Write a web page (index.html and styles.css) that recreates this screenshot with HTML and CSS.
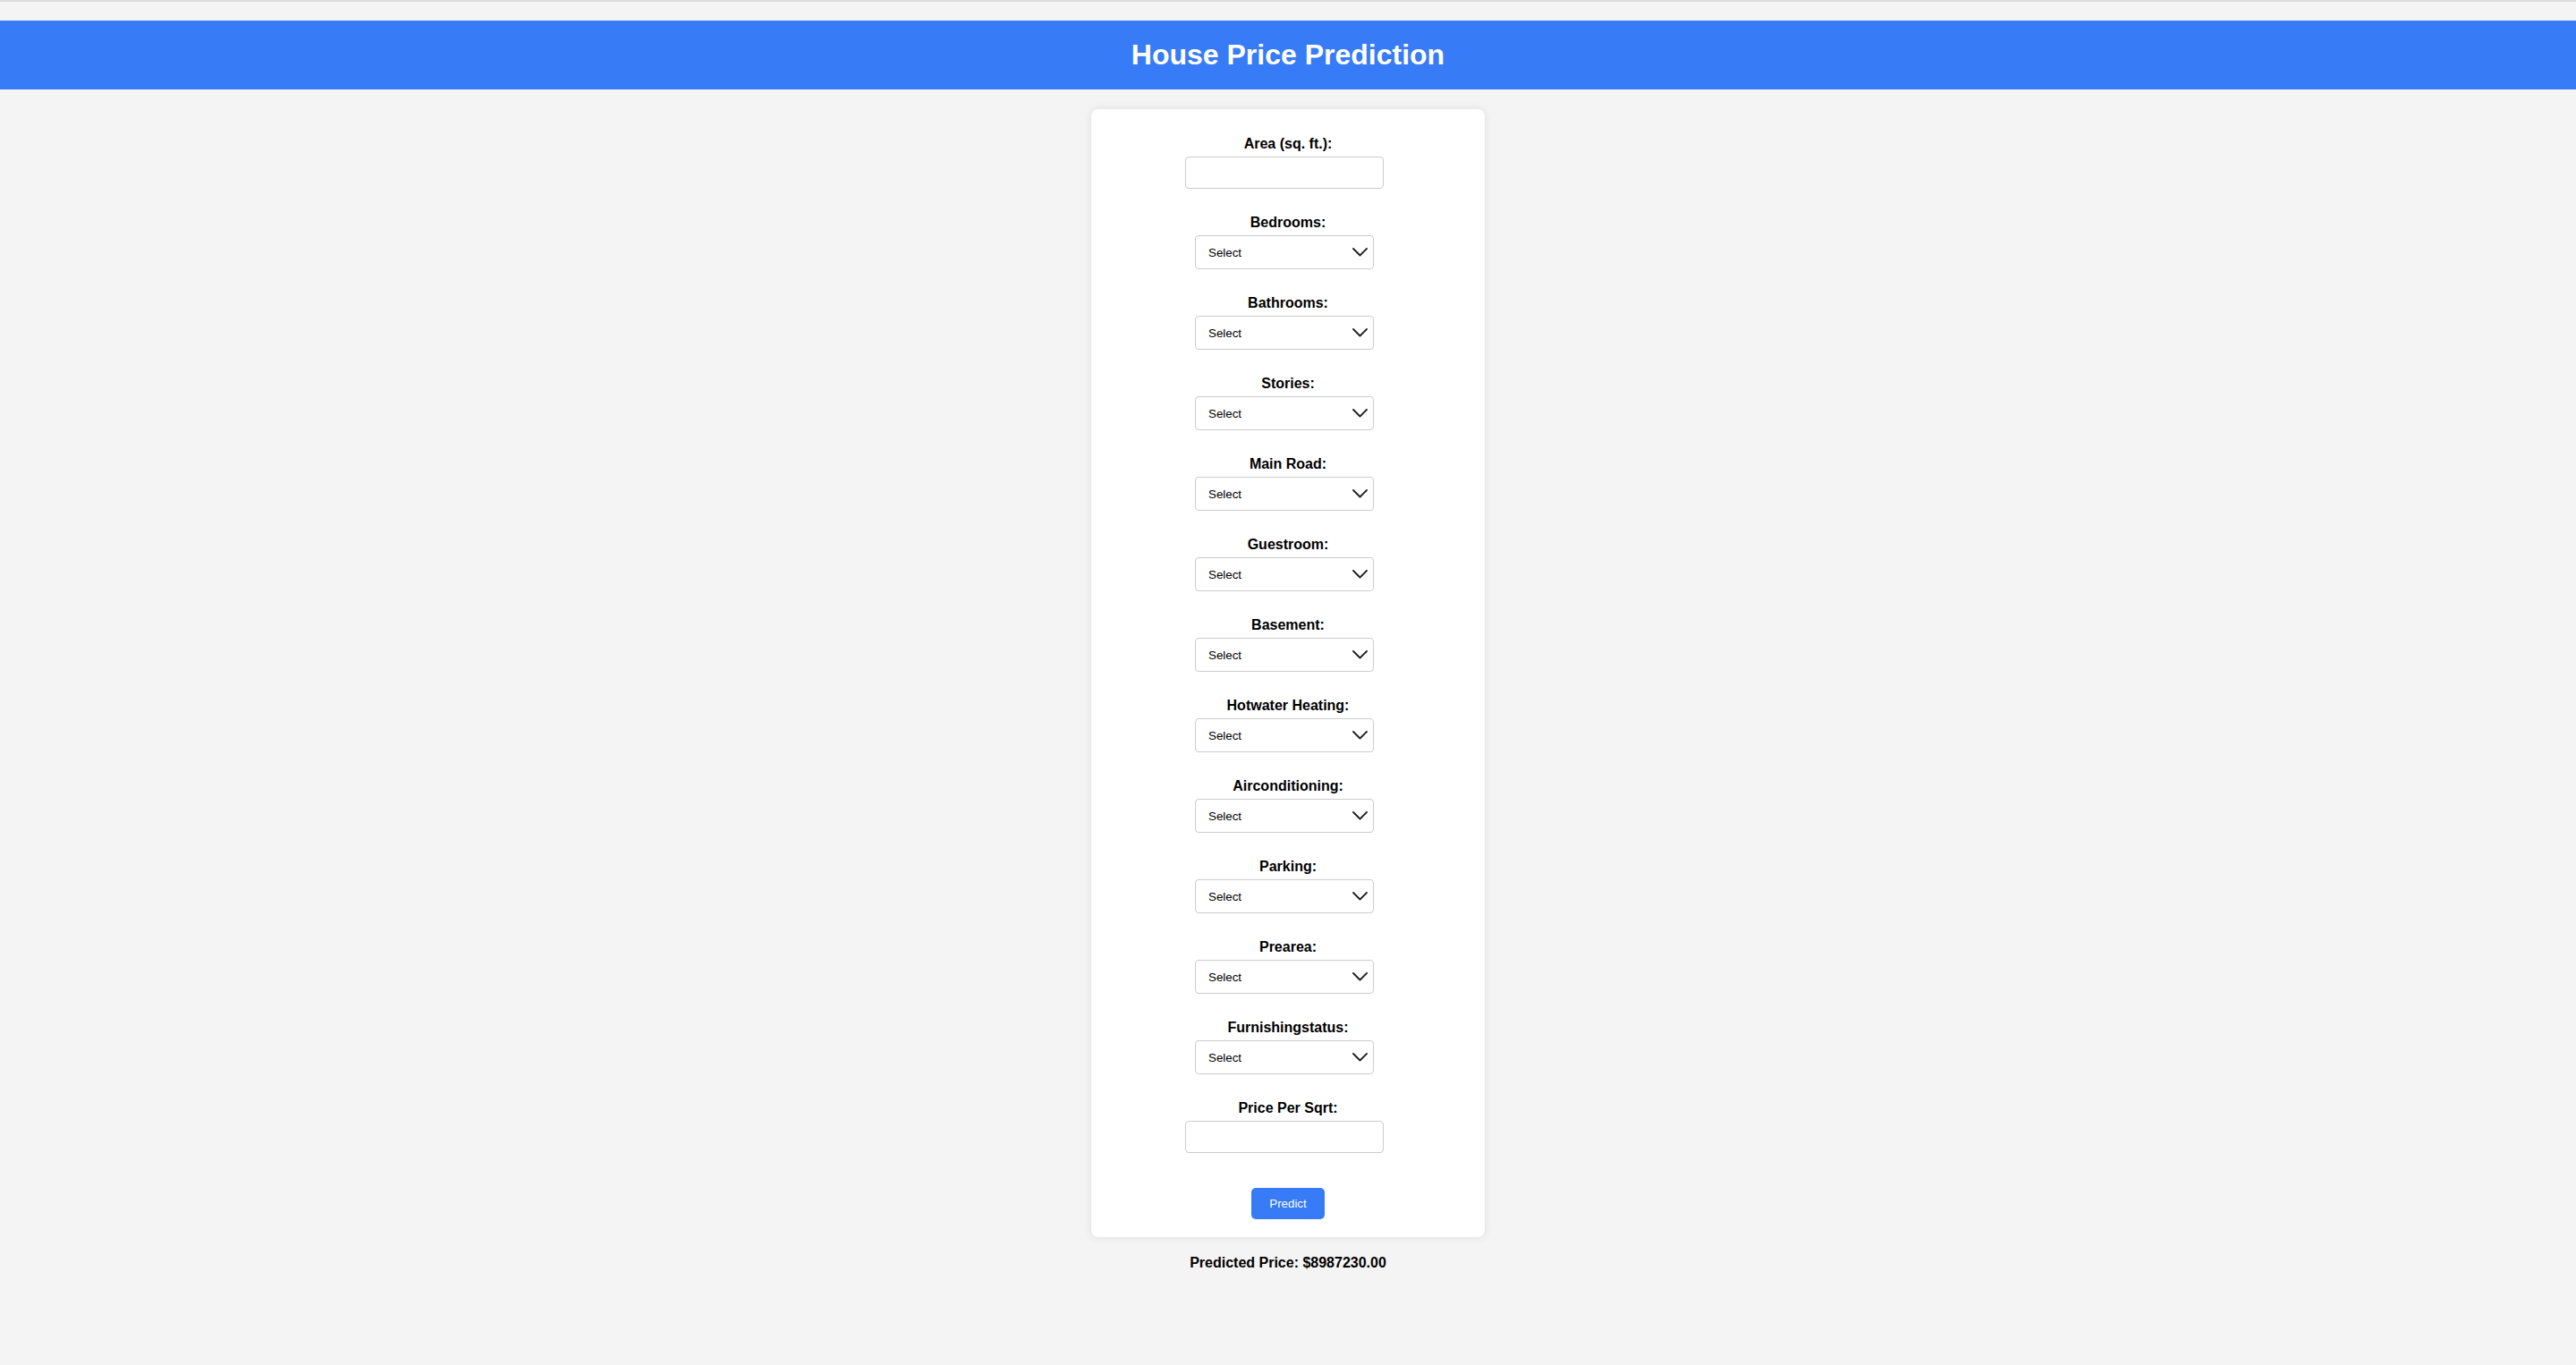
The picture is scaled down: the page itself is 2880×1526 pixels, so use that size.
FILE: index.html
```html
<!DOCTYPE html>
<html lang="en">
<head>
<meta charset="utf-8">
<title>House Price Prediction</title>
<link rel="stylesheet" href="styles.css">
</head>
<body>
<div class="topline"></div>
<header class="site-header">
  <h1 class="title">House Price Prediction</h1>
</header>
<main class="container">
  <form class="card">
    <div class="group">
      <label class="label">Area (sq. ft.):</label>
      <input class="text-input" type="text">
    </div>
    <div class="group">
      <label class="label">Bedrooms:</label>
      <div class="select-wrap"><select class="select"><option>Select</option></select><svg class="chev" viewBox="0 0 17 10" width="17" height="10"><polyline points="1,1 8.5,8.5 16,1" fill="none" stroke="#1e1e1e" stroke-width="1.8" stroke-linecap="round" stroke-linejoin="round"/></svg></div>
    </div>
    <div class="group">
      <label class="label">Bathrooms:</label>
      <div class="select-wrap"><select class="select"><option>Select</option></select><svg class="chev" viewBox="0 0 17 10" width="17" height="10"><polyline points="1,1 8.5,8.5 16,1" fill="none" stroke="#1e1e1e" stroke-width="1.8" stroke-linecap="round" stroke-linejoin="round"/></svg></div>
    </div>
    <div class="group">
      <label class="label">Stories:</label>
      <div class="select-wrap"><select class="select"><option>Select</option></select><svg class="chev" viewBox="0 0 17 10" width="17" height="10"><polyline points="1,1 8.5,8.5 16,1" fill="none" stroke="#1e1e1e" stroke-width="1.8" stroke-linecap="round" stroke-linejoin="round"/></svg></div>
    </div>
    <div class="group">
      <label class="label">Main Road:</label>
      <div class="select-wrap"><select class="select"><option>Select</option></select><svg class="chev" viewBox="0 0 17 10" width="17" height="10"><polyline points="1,1 8.5,8.5 16,1" fill="none" stroke="#1e1e1e" stroke-width="1.8" stroke-linecap="round" stroke-linejoin="round"/></svg></div>
    </div>
    <div class="group">
      <label class="label">Guestroom:</label>
      <div class="select-wrap"><select class="select"><option>Select</option></select><svg class="chev" viewBox="0 0 17 10" width="17" height="10"><polyline points="1,1 8.5,8.5 16,1" fill="none" stroke="#1e1e1e" stroke-width="1.8" stroke-linecap="round" stroke-linejoin="round"/></svg></div>
    </div>
    <div class="group">
      <label class="label">Basement:</label>
      <div class="select-wrap"><select class="select"><option>Select</option></select><svg class="chev" viewBox="0 0 17 10" width="17" height="10"><polyline points="1,1 8.5,8.5 16,1" fill="none" stroke="#1e1e1e" stroke-width="1.8" stroke-linecap="round" stroke-linejoin="round"/></svg></div>
    </div>
    <div class="group">
      <label class="label">Hotwater Heating:</label>
      <div class="select-wrap"><select class="select"><option>Select</option></select><svg class="chev" viewBox="0 0 17 10" width="17" height="10"><polyline points="1,1 8.5,8.5 16,1" fill="none" stroke="#1e1e1e" stroke-width="1.8" stroke-linecap="round" stroke-linejoin="round"/></svg></div>
    </div>
    <div class="group">
      <label class="label">Airconditioning:</label>
      <div class="select-wrap"><select class="select"><option>Select</option></select><svg class="chev" viewBox="0 0 17 10" width="17" height="10"><polyline points="1,1 8.5,8.5 16,1" fill="none" stroke="#1e1e1e" stroke-width="1.8" stroke-linecap="round" stroke-linejoin="round"/></svg></div>
    </div>
    <div class="group">
      <label class="label">Parking:</label>
      <div class="select-wrap"><select class="select"><option>Select</option></select><svg class="chev" viewBox="0 0 17 10" width="17" height="10"><polyline points="1,1 8.5,8.5 16,1" fill="none" stroke="#1e1e1e" stroke-width="1.8" stroke-linecap="round" stroke-linejoin="round"/></svg></div>
    </div>
    <div class="group">
      <label class="label">Prearea:</label>
      <div class="select-wrap"><select class="select"><option>Select</option></select><svg class="chev" viewBox="0 0 17 10" width="17" height="10"><polyline points="1,1 8.5,8.5 16,1" fill="none" stroke="#1e1e1e" stroke-width="1.8" stroke-linecap="round" stroke-linejoin="round"/></svg></div>
    </div>
    <div class="group">
      <label class="label">Furnishingstatus:</label>
      <div class="select-wrap"><select class="select"><option>Select</option></select><svg class="chev" viewBox="0 0 17 10" width="17" height="10"><polyline points="1,1 8.5,8.5 16,1" fill="none" stroke="#1e1e1e" stroke-width="1.8" stroke-linecap="round" stroke-linejoin="round"/></svg></div>
    </div>
    <div class="group">
      <label class="label">Price Per Sqrt:</label>
      <input class="text-input" type="text">
    </div>
    <button class="btn" type="button">Predict</button>
  </form>
  <p class="result">Predicted Price: $8987230.00</p>
</main>
</body>
</html>
```

FILE: styles.css
```css
* { box-sizing: border-box; }

body {
  margin: 0;
  background: #f4f4f4;
  font-family: "Liberation Sans", Arial, sans-serif;
  color: #000;
}

.topline {
  height: 2px;
  background: #dcdcdc;
  margin-bottom: 21px;
}

.site-header {
  background: #377bf6;
  height: 77px;
  display: flex;
  align-items: center;
  justify-content: center;
}

.title {
  margin: 0;
  color: #fff;
  font-size: 32px;
  font-weight: bold;
  line-height: 37px;
}

.container {
  display: flex;
  flex-direction: column;
  align-items: center;
  padding-top: 22px;
}

.card {
  width: 440px;
  background: #fff;
  border-radius: 8px;
  box-shadow: 0 0 10px rgba(0, 0, 0, 0.1);
  padding: 30px 0 20px;
  display: flex;
  flex-direction: column;
  align-items: center;
}

.group {
  display: flex;
  flex-direction: column;
  align-items: center;
  margin-bottom: 29px;
  width: 100%;
}

.label {
  font-size: 16px;
  font-weight: bold;
  line-height: 18px;
  margin-bottom: 5px;
}

.text-input {
  width: 222px;
  height: 36px;
  border: 1px solid #cccccc;
  border-radius: 4px;
  background: #fff;
  margin-right: 8px;
  padding: 0 8px;
  font: 13.33px "Liberation Sans", Arial, sans-serif;
}

.select-wrap {
  position: relative;
  width: 200px;
  height: 38px;
  margin-right: 8px;
}

.select {
  -webkit-appearance: none;
  appearance: none;
  width: 100%;
  height: 100%;
  border: 1px solid #cccccc;
  border-radius: 4px;
  background: #fff;
  color: #000;
  font: 13.33px "Liberation Sans", Arial, sans-serif;
  padding: 0 0 0 14px;
  margin: 0;
}

.chev {
  position: absolute;
  right: 7px;
  top: 14px;
  pointer-events: none;
}

.btn {
  margin-top: 10px;
  width: 82px;
  height: 35px;
  border: none;
  border-radius: 5px;
  background: #377bf6;
  color: #fff;
  font: 13.33px "Liberation Sans", Arial, sans-serif;
  padding: 0;
}

.result {
  margin: 20px 0 0;
  font-size: 16px;
  font-weight: bold;
  line-height: 18px;
}
```
